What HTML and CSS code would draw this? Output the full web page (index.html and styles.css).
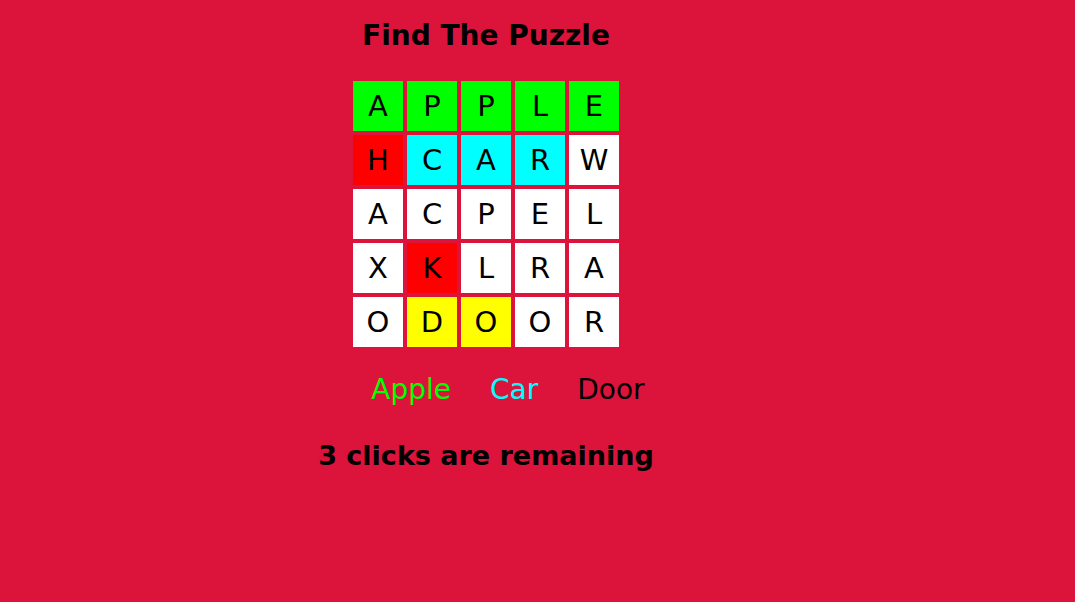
FILE: index.html
```html
<!DOCTYPE html>
<html>
<head>
<meta charset="utf-8">
<title>Find The Puzzle</title>
<link rel="stylesheet" href="styles.css">
</head>
<body>
<div class="page">
  <h1 class="title">Find The Puzzle</h1>
  <div class="grid">
    <div class="cell green">A</div>
    <div class="cell green">P</div>
    <div class="cell green">P</div>
    <div class="cell green">L</div>
    <div class="cell green">E</div>
    <div class="cell red">H</div>
    <div class="cell cyan">C</div>
    <div class="cell cyan">A</div>
    <div class="cell cyan">R</div>
    <div class="cell">W</div>
    <div class="cell">A</div>
    <div class="cell">C</div>
    <div class="cell">P</div>
    <div class="cell">E</div>
    <div class="cell">L</div>
    <div class="cell">X</div>
    <div class="cell red">K</div>
    <div class="cell">L</div>
    <div class="cell">R</div>
    <div class="cell">A</div>
    <div class="cell">O</div>
    <div class="cell yellow">D</div>
    <div class="cell yellow">O</div>
    <div class="cell">O</div>
    <div class="cell">R</div>
  </div>
  <div class="words">
    <span class="word found-green">Apple</span>
    <span class="word found-cyan">Car</span>
    <span class="word">Door</span>
  </div>
  <p class="status">3 clicks are remaining</p>
</div>
</body>
</html>
```
FILE: styles.css
```css
html, body {
  margin: 0;
  padding: 0;
  background: #dc143c;
  height: 100%;
}
body {
  font-family: "Comic Sans MS", "DejaVu Sans", sans-serif;
  color: #000;
}
.page {
  width: 972px;
  display: flex;
  flex-direction: column;
  align-items: center;
  padding-top: 18px;
}
.title {
  margin: 0;
  font-size: 28px;
  line-height: 36px;
  font-weight: bold;
}
.grid {
  margin-top: 27px;
  display: grid;
  grid-template-columns: repeat(5, 50px);
  grid-auto-rows: 50px;
  gap: 4px;
}
.cell {
  background: #fff;
  display: flex;
  align-items: center;
  justify-content: center;
  font-size: 29px;
}
.green { background: #00ff00; }
.red { background: #ff0000; }
.cyan { background: #00ffff; }
.yellow { background: #ffff00; }
.words {
  margin-top: 23px;
  margin-left: 44px;
  display: flex;
  gap: 39px;
  font-size: 28px;
  line-height: 40px;
}
.found-green { color: #00ff00; }
.found-cyan { color: #00ffff; }
.status {
  margin: 26px 0 0;
  font-size: 27px;
  line-height: 40px;
  font-weight: bold;
}
```
